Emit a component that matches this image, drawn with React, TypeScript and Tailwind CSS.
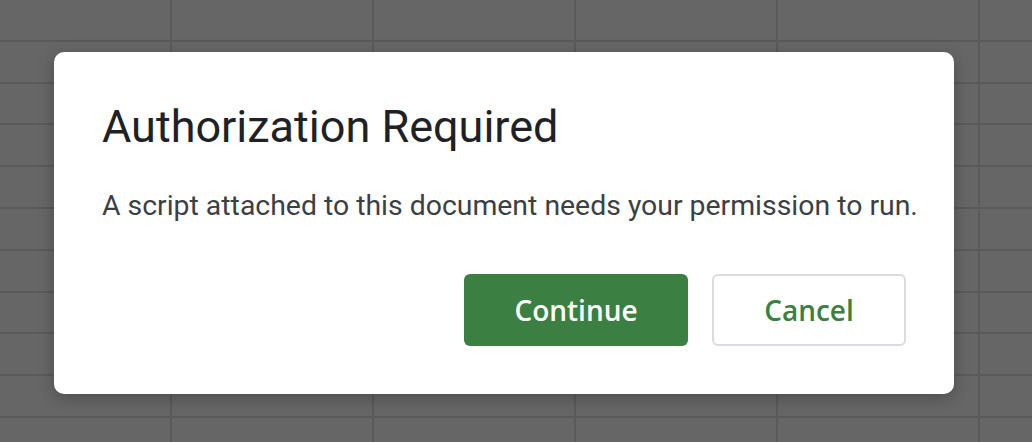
import React from "react";

const COLS = 6;
const ROWS = 11;

export default function App() {
  return (
    <div className="relative w-[1032px] h-[442px] overflow-hidden bg-[#666666]">
      {/* spreadsheet grid behind the overlay */}
      <div className="absolute inset-0 flex flex-col">
        {Array.from({ length: ROWS }).map((_, r) => (
          <div key={r} className="flex h-[41.8px] shrink-0 border-b-2 border-[#5a5a5a]">
            {Array.from({ length: COLS }).map((_, c) => (
              <div
                key={c}
                className={
                  c === 0
                    ? "w-[172px] shrink-0 border-r-2 border-[#5a5a5a]"
                    : "w-[202px] shrink-0 border-r-2 border-[#5a5a5a]"
                }
              />
            ))}
          </div>
        ))}
      </div>

      <div className="absolute left-[54px] top-[52px] w-[900px] h-[342px] bg-white rounded-[10px] shadow-[0_4px_16px_rgba(0,0,0,0.25)] px-12 pt-[48px] pb-12 flex flex-col">
        <h1 className="text-[45px] leading-[54px] text-[#202124] font-['Roboto',sans-serif]">
          Authorization Required
        </h1>
        <p className="mt-[34px] whitespace-nowrap text-[28.4px] leading-[36px] text-[#3c4043] font-['Roboto',sans-serif]">
          A script attached to this document needs your permission to run.
        </p>
        <div className="mt-auto flex justify-end gap-6">
          <button className="w-[224px] h-[72px] rounded-[6px] bg-[#3b7f43] text-white text-[28px] font-semibold font-['Open_Sans',sans-serif]">
            Continue
          </button>
          <button className="w-[194px] h-[72px] rounded-[6px] bg-white border-2 border-[#dadce0] text-[#3b7f43] text-[28px] font-semibold font-['Open_Sans',sans-serif]">
            Cancel
          </button>
        </div>
      </div>
    </div>
  );
}
